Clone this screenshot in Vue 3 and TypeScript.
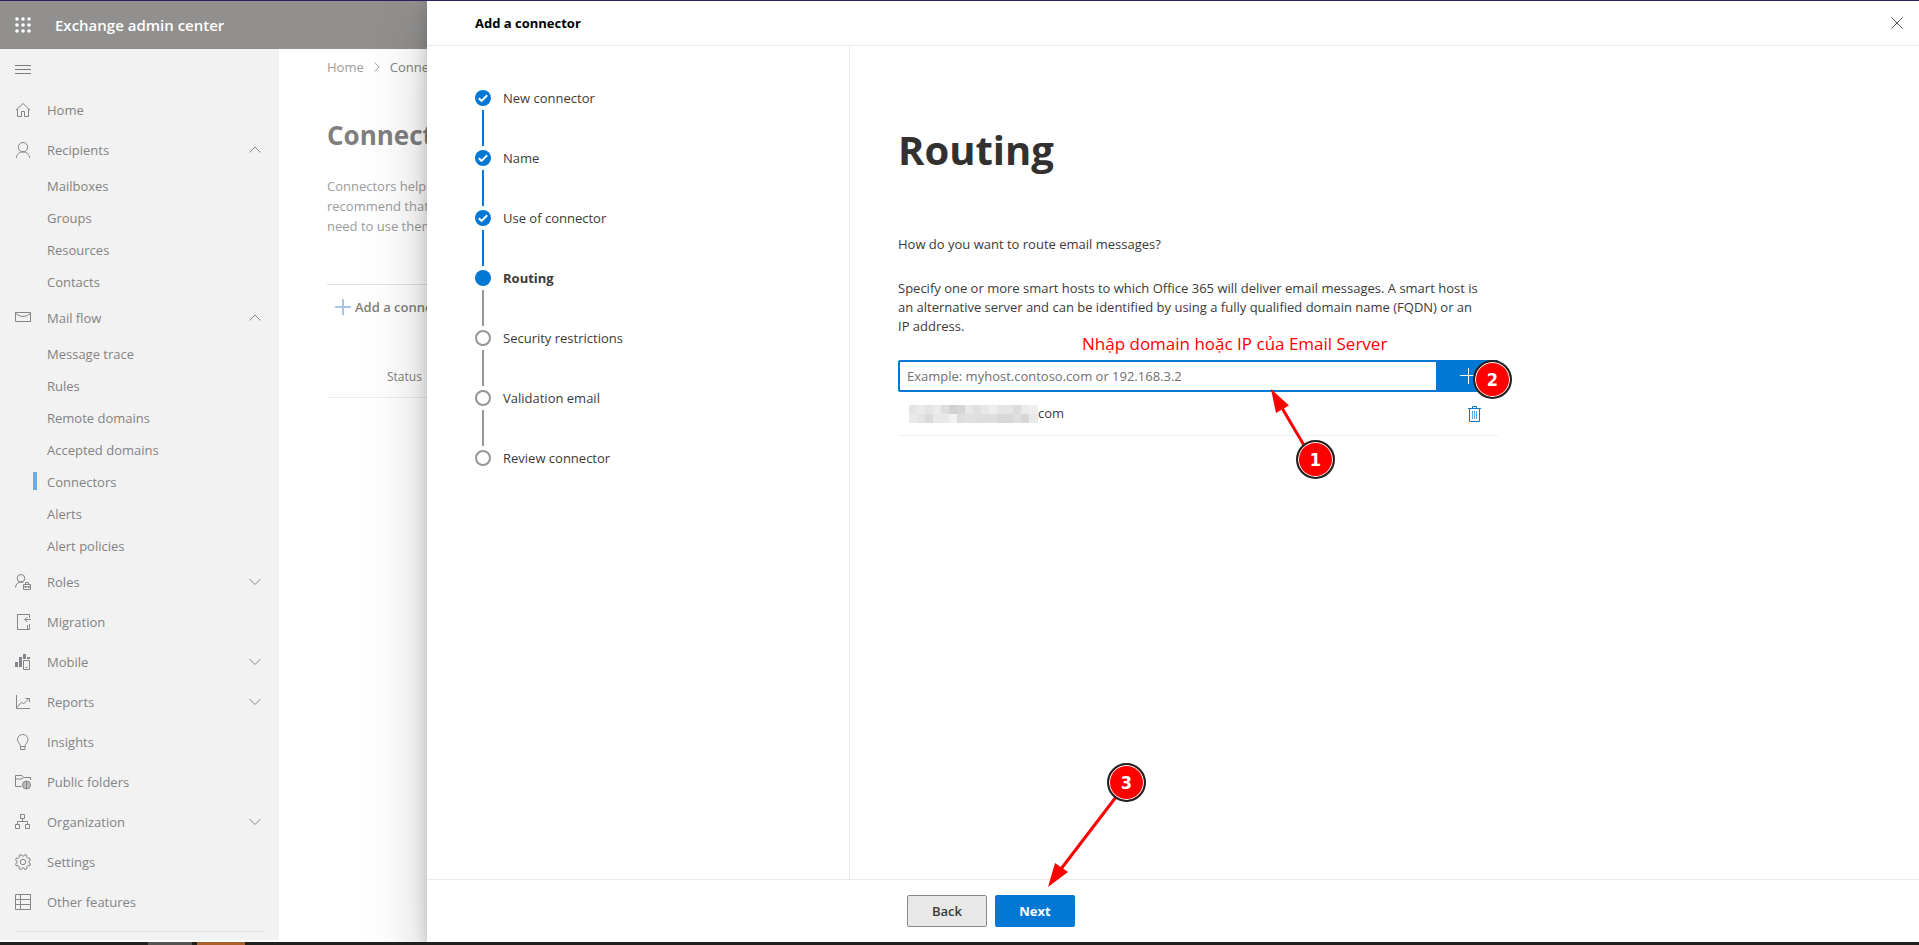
<script setup lang="ts">
import { ref } from 'vue'

interface NavItem {
  label: string
  icon: string
  fill?: string
  open?: boolean
  children?: string[]
}

function gearPath(teeth: number, outer: number, inner: number): string {
  const step = (Math.PI * 2) / teeth
  const points: string[] = []
  for (let i = 0; i < teeth; i++) {
    const a = (i + 0.5) * step
    const corners: [number, number][] = [
      [inner, a - step * 0.32],
      [outer, a - step * 0.2],
      [outer, a + step * 0.2],
      [inner, a + step * 0.32],
    ]
    for (const [r, t] of corners) {
      points.push(`${(8 + r * Math.cos(t)).toFixed(2)} ${(8 + r * Math.sin(t)).toFixed(2)}`)
    }
  }
  return `M${points.join('L')}Z`
}

const nav: NavItem[] = [
  { label: 'Home', icon: 'M1 8.2L8 1.5l7 6.7M2.5 7v7.5h4v-5h3v5h4V7' },
  {
    label: 'Recipients',
    icon: 'M8 .5a4.7 4.7 0 1 0 0 9.4a4.7 4.7 0 1 0 0-9.4M1.3 16C1.5 12.300 4.500 9.900 8 9.900S14.500 12.300 14.700 16',
    open: true,
    children: ['Mailboxes', 'Groups', 'Resources', 'Contacts'],
  },
  {
    label: 'Mail flow',
    icon: 'M.5 2.500h15v9H.5zM.5 3C4 7.500 12 7.500 15.500 3',
    open: true,
    children: ['Message trace', 'Rules', 'Remote domains', 'Accepted domains', 'Connectors', 'Alerts', 'Alert policies'],
  },
  {
    label: 'Roles',
    icon: 'M6 .5a3.800 3.800 0 1 0 0 7.600a3.800 3.800 0 1 0 0-7.600M.5 13.500C.7 10 3 8.100 6 8.100c1 0 1.500.2 2.200.5M8.500 10.500h7v5h-7zM10.500 10.500v-2h3v2M8.500 12.800h7M10.500 12v2M13.500 12v2',
    open: false,
  },
  { label: 'Migration', icon: 'M14.500 4V.5h-12v15h12v-5.500M15.800 5.500H9.800M12.300 3L9.800 5.500l2.500 2.500M12.500 15v-4' },
  {
    label: 'Mobile',
    icon: 'M8.500 6.500h6v9h-6zM10.500 13.500h2',
    fill: 'M0 8h3v5H0zM4 3h3v10H4zM8 0h3v5H8zM12 3h3v2h-3z',
    open: false,
  },
  { label: 'Reports', icon: 'M1.500 1v13.500H15M2 13.500L6.500 8l2 2L14 4.500M10.500 4.500h4V8', open: false },
  { label: 'Insights', icon: 'M5.500 12.500C5.500 9.500 2.500 9 2.500 5.500C2.500 2.500 4.800.5 7.700.5S13 2.500 13 5.500C13 9 10 9.500 10 12.500zM5.500 12.500v3H10v-3' },
  {
    label: 'Public folders',
    icon: 'M6.500 12.500h-6v-11h6.500l1.500 2h7V6M.5 5h6.500l1.500-1.500M11.500 7a4 4 0 1 0 0 8a4 4 0 1 0 0-8M11.500 7v8M7.500 11h8M8.200 9h6.600M8.200 13h6.600',
  },
  { label: 'Organization', icon: 'M5.500.5h4v4h-4zM7.500 4.500v3M2.500 10.500v-3h10v3M.5 10.500h4v4h-4zM10.500 10.500h4v4h-4z', open: false },
  { label: 'Settings', icon: `${gearPath(8, 7.7, 6)}M8 5.300a2.700 2.700 0 1 0 0 5.400a2.700 2.700 0 1 0 0-5.400` },
  { label: 'Other features', icon: 'M.5.5h15v15H.5zM.5 5.500h15M.5 10.500h15M5.500.5v15' },
]

const steps: { label: string; state: 'done' | 'current' | 'todo' }[] = [
  { label: 'New connector', state: 'done' },
  { label: 'Name', state: 'done' },
  { label: 'Use of connector', state: 'done' },
  { label: 'Routing', state: 'current' },
  { label: 'Security restrictions', state: 'todo' },
  { label: 'Validation email', state: 'todo' },
  { label: 'Review connector', state: 'todo' },
]

const mosaic = [
  [228, 234, 228, 235, 222, 210, 214, 232, 224, 232, 238, 228, 228, 220, 234, 239],
  [234, 228, 218, 232, 233, 242, 222, 224, 223, 222, 222, 216, 216, 223, 214, 233],
]

const host = ref('')
</script>

<template>
  <div class="page">
    <div class="topline"></div>
    <div class="screen">
      <div class="shell">
        <header class="suite">
          <button class="waffle" type="button" aria-label="App launcher">
            <svg width="16" height="16" viewBox="0 0 16 16">
              <template v-for="r in 3" :key="r">
                <circle v-for="c in 3" :key="c" :cx="c * 6 - 4" :cy="r * 6 - 4" r="1.8" fill="#fff" />
              </template>
            </svg>
          </button>
          <span class="suite-title">Exchange admin center</span>
        </header>
        <div class="columns">
          <nav class="sidebar" aria-label="Main">
            <button class="burger" type="button" aria-label="Collapse navigation">
              <svg width="16" height="10" viewBox="0 0 16 10"><path d="M0 .5h16M0 4.500h16M0 8.500h16" stroke="#7c7c7c" /></svg>
            </button>
            <ul>
              <li v-for="item in nav" :key="item.label">
                <a class="nav-row" href="#">
                  <svg class="nav-icon" width="16" height="16" viewBox="0 0 16 16">
                    <path :d="item.icon" fill="none" stroke="#868389" />
                    <path v-if="item.fill" :d="item.fill" fill="#868389" />
                  </svg>
                  <span class="nav-label">{{ item.label }}</span>
                  <svg v-if="item.open !== undefined" width="12" height="8" viewBox="0 0 12 8">
                    <path :d="item.open ? 'M.5 6.500L6 1l5.500 5.500' : 'M.5 1L6 6.500 11.500 1'" fill="none" stroke="#858585" />
                  </svg>
                </a>
                <ul v-if="item.children">
                  <li v-for="child in item.children" :key="child">
                    <a class="sub-row" :class="{ active: child === 'Connectors' }" href="#">{{ child }}</a>
                  </li>
                </ul>
              </li>
            </ul>
            <hr />
          </nav>
          <main class="main">
            <div class="crumbs">
              <a href="#">Home</a>
              <svg width="6" height="10" viewBox="0 0 6 10"><path d="M.5.5L5 5 .5 9.500" fill="none" stroke="#aaa" /></svg>
              <span>Connectors</span>
            </div>
            <h1>Connectors</h1>
            <p class="intro">Connectors help<br />recommend that<br />need to use them</p>
            <button class="add" type="button">
              <svg width="16" height="16" viewBox="0 0 16 16"><path d="M0 8h16M8 0v16" stroke="#a9c3e6" stroke-width="2" /></svg>
              Add a connector
            </button>
            <div class="list-head">Status</div>
          </main>
        </div>
      </div>

      <section class="panel" role="dialog" aria-labelledby="panel-title">
        <header class="panel-head">
          <h2 id="panel-title">Add a connector</h2>
          <button type="button" aria-label="Close">
            <svg width="12" height="12" viewBox="0 0 12 12"><path d="M.5.5l11 11M11.500.5l-11 11" stroke="#555" /></svg>
          </button>
        </header>
        <div class="panel-body">
          <ol class="steps">
            <li v-for="s in steps" :key="s.label" :class="s.state">
              <svg class="dot" width="16" height="16" viewBox="0 0 16 16">
                <circle v-if="s.state === 'todo'" cx="8" cy="8" r="7" fill="#fff" stroke="#979593" stroke-width="2" />
                <circle v-else cx="8" cy="8" r="8" fill="#0078d4" />
                <path v-if="s.state === 'done'" d="M3.800 8.200l2.700 2.700 5.700-5.600" fill="none" stroke="#fff" stroke-width="2" />
              </svg>
              <span>{{ s.label }}</span>
            </li>
          </ol>
          <form class="content" @submit.prevent>
            <h3>Routing</h3>
            <p>How do you want to route email messages?</p>
            <label for="host">Specify one or more smart hosts to which Office 365 will deliver email messages. A smart host is an alternative server and can be identified by using a fully qualified domain name (FQDN) or an IP address.</label>
            <div class="field">
              <div class="entry">
                <input id="host" v-model="host" type="text" placeholder="Example: myhost.contoso.com or 192.168.3.2" />
                <button type="submit" aria-label="Add host">
                  <svg width="16" height="16" viewBox="0 0 16 16"><path d="M0 7.500h16M8.500 0v16" stroke="#fff" /></svg>
                </button>
              </div>
              <div class="host-row">
                <svg width="129" height="18" viewBox="0 0 129 18" shape-rendering="crispEdges" aria-hidden="true">
                  <template v-for="(line, y) in mosaic" :key="y">
                    <rect v-for="(v, x) in line" :key="x" :x="x * 8" :y="y * 9" width="9" height="9" :fill="`rgb(${v},${v},${v})`" />
                  </template>
                </svg>
                <span>com</span>
                <button type="button" aria-label="Delete host">
                  <svg width="13" height="16" viewBox="0 0 13 16">
                    <path d="M0 2.500h13M4.500 2.500v-2h4v2M1.500 2.500v13h10v-13" fill="none" stroke="#0078d4" />
                    <path d="M4.500 5v8M6.500 5v8M8.500 5v8" stroke="#5ba5e0" />
                  </svg>
                </button>
              </div>
              <strong class="note">Nhập domain hoặc IP của Email Server</strong>
              <svg class="arrow arrow-input" width="50" height="70" viewBox="0 0 50 70">
                <path d="M35 58L12 19" stroke="#f00" stroke-width="3" />
                <path d="M1 0l18 16.500-13 7.500z" fill="#f00" />
              </svg>
              <span class="badge badge-one">1</span>
              <span class="badge badge-two">2</span>
            </div>
          </form>
        </div>
        <footer class="panel-foot">
          <button class="back" type="button">Back</button>
          <button class="next" type="button">Next</button>
          <svg class="arrow arrow-next" width="80" height="100" viewBox="0 0 80 100">
            <path d="M68 9L13 81" stroke="#f00" stroke-width="3" />
            <path d="M0 99l7-24 13 9z" fill="#f00" />
          </svg>
          <span class="badge badge-three">3</span>
        </footer>
      </section>
    </div>
    <div class="taskbar"><span class="task"></span><span class="task hot"></span></div>
  </div>
</template>

<style>
body {
  margin: 0;
  background: #fff;
}
</style>

<style scoped>
.page {
  min-height: 100vh;
  display: flex;
  flex-direction: column;
  overflow: hidden;
  font: 13px/20px 'Open Sans', 'Noto Sans', sans-serif;
  color: #3b3a39;
}
* {
  box-sizing: border-box;
}
button,
input {
  font: inherit;
  color: inherit;
  border: 0;
  padding: 0;
  background: none;
}
button {
  display: flex;
  align-items: center;
}
svg {
  flex: none;
  display: block;
}
ul,
ol {
  list-style: none;
  margin: 0;
  padding: 0;
}
a {
  color: inherit;
  text-decoration: none;
}
.topline {
  height: 1px;
  background: #2f1f5c;
}
.screen {
  flex: 1;
  position: relative;
  display: flex;
}
.shell {
  flex: 1;
  display: flex;
  flex-direction: column;
  padding-bottom: 2px;
}
.suite {
  height: 48px;
  background: #91908f;
  display: flex;
  align-items: center;
  gap: 24px;
  padding: 0 15px;
}
.suite-title {
  font-size: 15px;
  font-weight: 600;
  color: #fff;
}
.columns {
  flex: 1;
  display: flex;
}
.sidebar {
  width: 279px;
  background: #f2f2f2;
  color: #838383;
}
.burger {
  height: 41px;
  padding-left: 15px;
}
.nav-row {
  height: 40px;
  padding: 0 18px 0 15px;
  display: flex;
  align-items: center;
  gap: 16px;
}
.nav-label {
  flex: 1;
}
.sub-row {
  display: flex;
  align-items: center;
  height: 32px;
  padding-left: 47px;
  position: relative;
}
.sub-row.active::before {
  content: '';
  position: absolute;
  left: 33px;
  top: 6px;
  width: 4px;
  height: 18px;
  background: #6aaee6;
}
hr {
  margin: 9px 16px 0 15px;
  border: 0;
  border-top: 1px solid #dcdcdc;
}
.main {
  flex: 1;
  padding: 8px 48px;
  color: #9c9c9c;
}
.crumbs {
  display: flex;
  align-items: center;
  gap: 10px;
}
.crumbs span {
  color: #848484;
}
h1 {
  margin: 40px 0 23px;
  font-size: 26px;
  line-height: 36px;
  font-weight: 700;
  color: #7f7f7f;
}
.intro {
  margin: 0 0 48px;
}
.add {
  width: 100%;
  height: 44px;
  padding-left: 8px;
  gap: 4px;
  border-top: 1px solid #e2e2e2;
  font-weight: 600;
  color: #7f7f7f;
}
.list-head {
  height: 70px;
  padding: 39px 60px 0;
  font-size: 12px;
  color: #808080;
  border-bottom: 1px solid #ececec;
}
.panel {
  position: absolute;
  top: 0;
  right: 0;
  bottom: 0;
  width: calc(100% - 427px);
  background: #fff;
  box-shadow: 0 26px 58px rgba(0, 0, 0, 0.22), 0 5px 14px rgba(0, 0, 0, 0.18);
  clip-path: inset(0 0 0 -80px);
  display: flex;
  flex-direction: column;
}
.panel-head {
  height: 45px;
  padding: 0 16px 0 48px;
  display: flex;
  align-items: center;
  justify-content: space-between;
  border-bottom: 1px solid #eaeaea;
}
h2 {
  margin: 0;
  font-size: 13px;
  font-weight: 700;
  color: #000;
}
.panel-body {
  flex: 1;
  display: flex;
}
.steps {
  width: 423px;
  padding: 42px 48px;
  border-right: 1px solid #eaeaea;
}
.steps li {
  height: 60px;
  display: flex;
  align-items: flex-start;
  gap: 12px;
  position: relative;
}
.steps .dot {
  margin-top: 2px;
}
.steps li:not(:last-child)::after {
  content: '';
  position: absolute;
  left: 7px;
  top: 22px;
  width: 2px;
  height: 36px;
  background: #979593;
}
.steps .done:not(:last-child)::after {
  background: #0078d4;
}
.current {
  font-weight: 700;
}
.content {
  flex: 1;
  padding: 79px 48px 0;
  line-height: 19px;
}
h3 {
  margin: 0 0 60px;
  font-size: 40px;
  line-height: 50px;
  font-weight: 700;
  color: #323130;
}
.content p {
  margin: 0 0 25px;
}
label {
  display: block;
  max-width: 584px;
  margin-bottom: 24px;
}
.field {
  max-width: 600px;
  position: relative;
}
.entry {
  display: flex;
  height: 32px;
}
input {
  flex: 1;
  min-width: 0;
  padding: 0 7px;
  border: 2px solid #0078d4;
  border-radius: 2px 0 0 2px;
  outline: none;
}
input::placeholder {
  color: #707070;
  opacity: 1;
}
.entry button {
  width: 60px;
  justify-content: center;
  background: #0078d4;
}
.host-row {
  display: flex;
  align-items: center;
  height: 44px;
  padding: 0 17px 0 11px;
  border-bottom: 1px solid #f0f0f0;
}
.host-row span {
  flex: 1;
}
.note {
  position: absolute;
  left: 184px;
  top: -27px;
  font: 17px/22px 'Open Sans', 'Noto Sans', sans-serif;
  color: #f00;
  white-space: nowrap;
}
.arrow {
  position: absolute;
}
.arrow-input {
  left: 372px;
  top: 29px;
}
.badge {
  position: absolute;
  width: 39px;
  height: 39px;
  border: 2px solid #222;
  border-radius: 50%;
  background: #f00;
  box-shadow: inset 0 0 0 1px #fff;
  color: #fff;
  font: 700 18px/35px 'DejaVu Sans Condensed', 'Open Sans', sans-serif;
  text-align: center;
}
.badge-one {
  left: 398px;
  top: 80px;
}
.badge-two {
  left: 575px;
  top: 0;
}
.panel-foot {
  position: relative;
  height: 63px;
  padding: 15px 0 0 480px;
  display: flex;
  align-items: flex-start;
  gap: 8px;
  border-top: 1px solid #eaeaea;
}
.panel-foot button {
  width: 80px;
  height: 32px;
  justify-content: center;
  border-radius: 2px;
  font-weight: 600;
}
.back {
  border: 1px solid #8a8886;
  background: #e8e8e8;
}
.panel-foot .next {
  background: #0078d4;
  color: #fff;
  font-weight: 700;
}
.arrow-next {
  left: 621px;
  top: -92px;
}
.badge-three {
  left: 680px;
  top: -117px;
}
.taskbar {
  height: 3px;
  padding-left: 148px;
  display: flex;
  gap: 5px;
  background: #22201e;
}
.task {
  width: 44px;
  background: #55534f;
}
.task.hot {
  width: 48px;
  background: #a9602b;
}
</style>
